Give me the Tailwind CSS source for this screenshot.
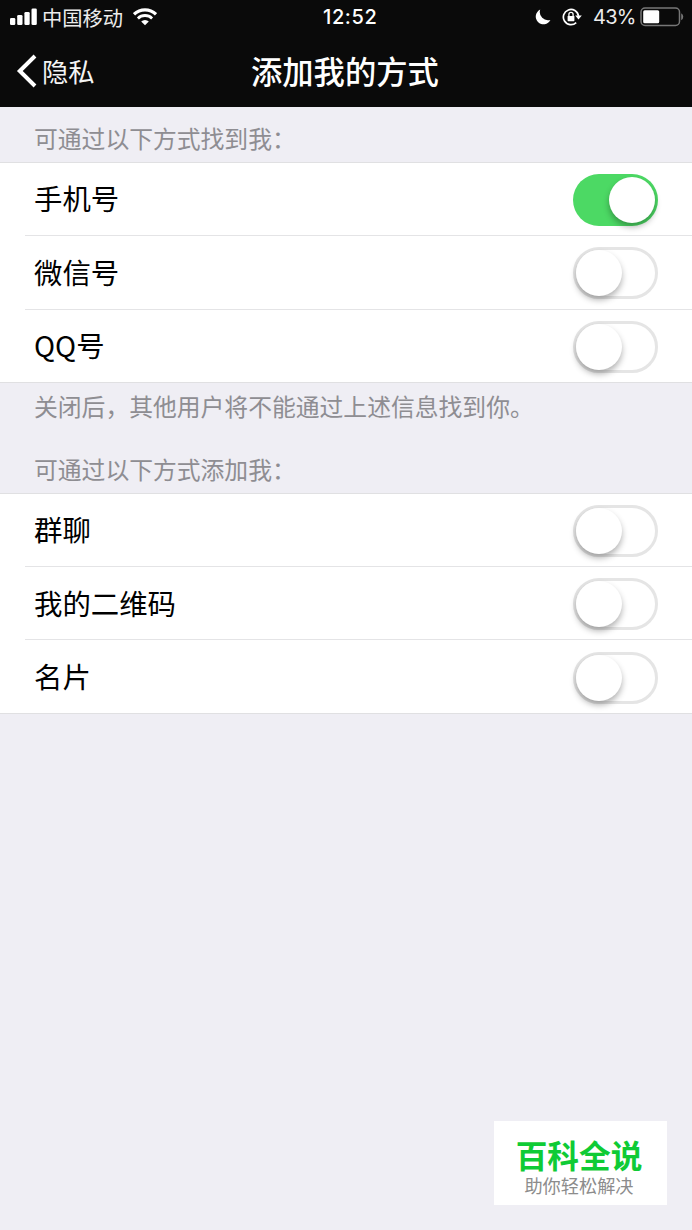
<!DOCTYPE html>
<html lang="zh-CN">
<head>
  <meta charset="UTF-8">
  <meta name="viewport" content="width=device-width, initial-scale=1.0">
  <title>添加我的方式</title>
  <script src="https://cdn.jsdelivr.net/npm/@tailwindcss/browser@4"></script>
</head>
<body class="relative h-[1230px] overflow-hidden bg-[#efeef4] font-['Noto_Sans_CJK_SC',sans-serif] text-black">

  <!-- Header -->
  <header class="h-[107px] bg-[#0a0a0a] text-white">
    <!-- Status bar -->
    <div class="relative flex h-[34px] items-center">
      <svg class="ml-[10px] h-[18px] w-[27px]" viewBox="0 0 27 18" fill="currentColor">
        <rect x="0" y="10" width="5.3" height="7" rx="1.3"/>
        <rect x="7.2" y="7" width="5.3" height="10" rx="1.3"/>
        <rect x="14.4" y="4" width="5.3" height="13" rx="1.3"/>
        <rect x="21.5" y="0.5" width="5.3" height="16.5" rx="1.3"/>
      </svg>
      <span class="ml-[5px] text-[20.3px] font-normal leading-[34px] text-[#ececec]">中国移动</span>
      <svg class="ml-[10px] h-[18px] w-6" viewBox="0 0 24 18" fill="none" stroke="currentColor">
        <path d="M1 6.3a15.8 15.8 0 0 1 22 0" stroke-width="3.2"/>
        <path d="M4.9 10.4a10.2 10.2 0 0 1 14.2 0" stroke-width="2.8"/>
        <path d="M12 17.3l-3.8-3.8a5.5 5.5 0 0 1 7.6 0z" fill="currentColor" stroke="none"/>
      </svg>
      <span class="absolute left-[323px] font-['Inter',sans-serif] text-[20px] font-medium leading-[36px] tracking-[0.6px]">12:52</span>
      <div class="absolute right-2 flex h-[34px] items-center">
        <svg class="h-4 w-4" viewBox="0 0 16 16" fill="currentColor">
          <path d="M5.2 0.6a7.7 7.7 0 1 0 10.2 10.3A8.2 8.2 0 0 1 5.2 0.6z"/>
        </svg>
        <svg class="ml-[11px] h-[18px] w-5" viewBox="0 0 20 18" fill="none" stroke="currentColor">
          <path d="M14.2 14.6A7.6 7.6 0 1 1 16.5 8" stroke-width="1.7"/>
          <path d="M13.2 7.6h6.6l-3.3 4z" fill="currentColor" stroke="none"/>
          <rect x="5.6" y="8" width="6.8" height="5.2" rx="0.6" fill="currentColor" stroke="none"/>
          <path d="M6.9 8.2V6.4a2.1 2.1 0 0 1 4.2 0v1.8" stroke-width="1.3"/>
        </svg>
        <span class="ml-[11px] w-[43px] whitespace-nowrap font-['Inter',sans-serif] text-[20px] font-normal leading-[36px] tracking-[-0.7px] text-[#ececec]">43%</span>
        <svg class="ml-1 h-5 w-11" viewBox="0 0 44 20" fill="none">
          <rect x="1" y="1" width="38.5" height="17.5" rx="4" stroke="#777" stroke-width="1.5"/>
          <rect x="3.2" y="3.2" width="16" height="13" rx="1.5" fill="#fff"/>
          <path d="M41.2 6.3a4 4 0 0 1 0 7z" fill="#777"/>
        </svg>
      </div>
    </div>
    <!-- Nav bar -->
    <div class="relative flex h-[73px] items-center">
      <svg class="ml-4 h-9 w-[22px]" viewBox="0 0 22 36" fill="none" stroke="currentColor" stroke-width="4">
        <path d="M19 3L3.8 18L19 33"/>
      </svg>
      <span class="ml-1 text-[26.3px] font-normal leading-[71px] text-[#f4f4f4]">隐私</span>
      <h1 class="absolute left-[251px] text-[31.3px] font-medium leading-[68px]">添加我的方式</h1>
    </div>
  </header>

  <main>
    <h2 class="h-[55px] pl-[34px] text-[23.8px] font-normal leading-[62px] text-[#8e8d92]">可通过以下方式找到我：</h2>

    <!-- Find me by -->
    <ul class="border-y border-[#e0e0e2] bg-white">
      <li class="flex h-[72px] items-center justify-between pl-[34px] pr-[34px]">
        <span class="mb-0.5 text-[28.4px] leading-none">手机号</span>
        <span class="mt-0.5 flex h-[52px] w-[85px] items-center justify-end rounded-full bg-[#4cd964] pr-[3px]">
          <span class="size-[46px] rounded-full bg-white shadow-[0_4px_6px_rgba(0,0,0,0.3)]"></span>
        </span>
      </li>
      <li class="ml-[25px] flex h-[74px] items-center justify-between border-t border-[#e4e4e6] pl-[9px] pr-[34px]">
        <span class="text-[28.4px] leading-none">微信号</span>
        <span class="flex h-[52px] w-[85px] items-center rounded-full border-[3px] border-[#e5e5e5]">
          <span class="size-[46px] rounded-full bg-white shadow-[0_4px_6px_rgba(0,0,0,0.3)]"></span>
        </span>
      </li>
      <li class="ml-[25px] flex h-[73px] items-center justify-between border-t border-[#e4e4e6] pl-[9px] pr-[34px]">
        <span class="mb-0.5 text-[28.4px] leading-none">QQ号</span>
        <span class="mt-0.5 flex h-[52px] w-[85px] items-center rounded-full border-[3px] border-[#e5e5e5]">
          <span class="size-[46px] rounded-full bg-white shadow-[0_4px_6px_rgba(0,0,0,0.3)]"></span>
        </span>
      </li>
    </ul>

    <p class="h-[50px] pl-[34px] text-[23.8px] font-normal leading-[46px] text-[#8e8d92]">关闭后，其他用户将不能通过上述信息找到你。</p>
    <h2 class="h-[60px] pl-[34px] text-[23.8px] font-normal leading-[72px] text-[#8e8d92]">可通过以下方式添加我：</h2>

    <!-- Add me by -->
    <ul class="border-y border-[#e0e0e2] bg-white">
      <li class="flex h-[72px] items-center justify-between pl-[34px] pr-[34px]">
        <span class="mb-0.5 text-[28.4px] leading-none">群聊</span>
        <span class="mt-0.5 flex h-[52px] w-[85px] items-center rounded-full border-[3px] border-[#e5e5e5]">
          <span class="size-[46px] rounded-full bg-white shadow-[0_4px_6px_rgba(0,0,0,0.3)]"></span>
        </span>
      </li>
      <li class="ml-[25px] flex h-[73px] items-center justify-between border-t border-[#e4e4e6] pl-[9px] pr-[34px]">
        <span class="text-[28.4px] leading-none">我的二维码</span>
        <span class="mt-0.5 flex h-[52px] w-[85px] items-center rounded-full border-[3px] border-[#e5e5e5]">
          <span class="size-[46px] rounded-full bg-white shadow-[0_4px_6px_rgba(0,0,0,0.3)]"></span>
        </span>
      </li>
      <li class="ml-[25px] flex h-[74px] items-center justify-between border-t border-[#e4e4e6] pl-[9px] pr-[34px]">
        <span class="text-[28.4px] leading-none">名片</span>
        <span class="mt-0.5 flex h-[52px] w-[85px] items-center rounded-full border-[3px] border-[#e5e5e5]">
          <span class="size-[46px] rounded-full bg-white shadow-[0_4px_6px_rgba(0,0,0,0.3)]"></span>
        </span>
      </li>
    </ul>
  </main>

  <!-- Floating badge -->
  <div class="absolute bottom-[25px] right-[25px] flex h-[84px] w-[173px] flex-col items-center bg-white pr-[3px] pt-4 font-['Liberation_Sans','Noto_Sans_CJK_SC',sans-serif]">
    <span class="text-[31.7px] font-bold leading-[40px] text-[#0fcb35]">百科全说</span>
    <span class="text-[18.2px] font-normal leading-[21px] text-[#8c8c8c]">助你轻松解决</span>
  </div>
</body>
</html>
